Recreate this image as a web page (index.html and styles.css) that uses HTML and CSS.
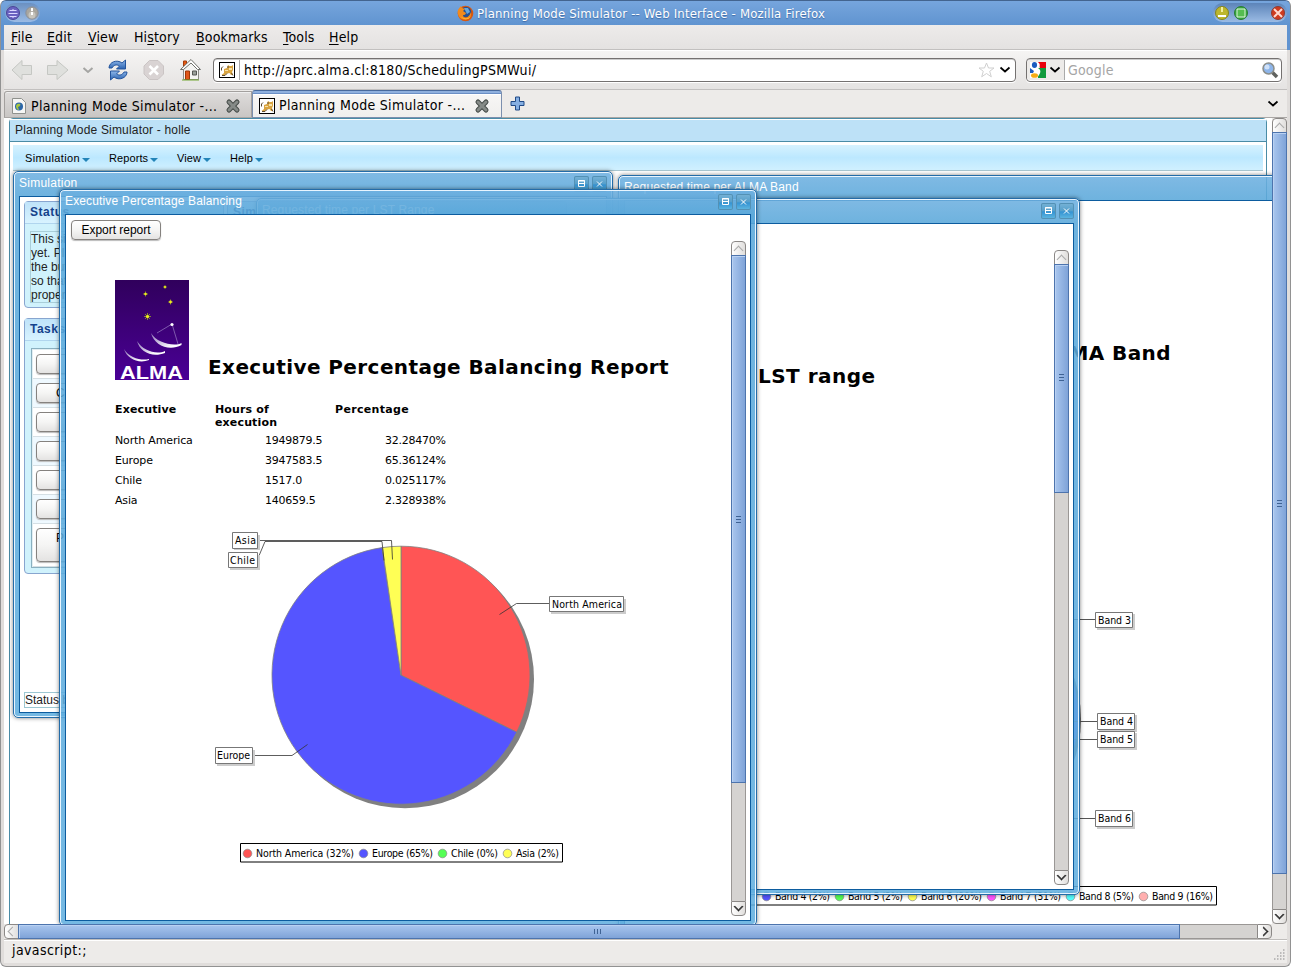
FILE: index.html
```html
<!DOCTYPE html>
<html lang="en">
<head>
<meta charset="utf-8">
<title>Planning Mode Simulator</title>
<link rel="stylesheet" href="styles.css">
</head>
<body>
<svg width="0" height="0" class="defs">
  <defs>
    <linearGradient id="gBlue" x1="0" y1="0" x2="0" y2="1"><stop offset="0" stop-color="#8fb8ea"/><stop offset="1" stop-color="#2a62b0"/></linearGradient>
    <linearGradient id="gAlma" x1="0" y1="0" x2="0" y2="1"><stop offset="0" stop-color="#30005c"/><stop offset="1" stop-color="#4a0096"/></linearGradient>
    <linearGradient id="gDish" x1="0" y1="0" x2="1" y2="1"><stop offset="0" stop-color="#8d74b8"/><stop offset="0.8" stop-color="#fff"/></linearGradient>
    <symbol id="cat" viewBox="0 0 16 16"><rect x=".5" y=".5" width="15" height="15" fill="#fff" stroke="#000"/><path d="M5 7l3-1 1-3 1.500 1h2L14 3v5l-1 2 1 3h-2l-1.500-2L8 11.500 6 13H2.500L5 11z" fill="#d9a441"/><path d="M2.500 8.500V6L4 4.500M3 13.500h3l2-2M9 4v2M12.500 11l1.500 2.500" stroke="#5c4a30" fill="none"/><path d="M10 6h3v2h-3zM6 8h3v1H6z" fill="#f7e2a8"/></symbol>
    <symbol id="closeTab" viewBox="0 0 16 16"><path d="M4 4l8 8M12 4l-8 8" stroke="#454b48" stroke-width="5" stroke-linecap="round"/><path d="M4 4l8 8M12 4l-8 8" stroke="#858a87" stroke-width="3" stroke-linecap="round"/></symbol>
    <symbol id="chev" viewBox="0 0 12 8"><path d="M1.500 1.500L6 5.500l4.500-4" fill="none" stroke="currentColor" stroke-width="1.700"/></symbol>
    <symbol id="max" viewBox="0 0 15 16"><path d="M4.500 4.500h6v6h-6zM4 5h7M4 7.500h7" fill="none" stroke="#fff"/></symbol>
    <symbol id="cls" viewBox="0 0 15 16"><path d="M5 5.500l5 5M10 5.500l-5 5" fill="none" stroke="#fff" stroke-width="1"/></symbol>
  </defs>
</svg>
<div class="browser">
  <header class="titlebar">
    <div class="pill pill-left">
      <svg width="14" height="14" viewBox="0 0 14 14"><circle cx="7" cy="7" r="6.500" fill="#6a62c0" stroke="#4b4799"/><path d="M3.500 4.500h7M2.500 7.500h9M3.500 10.500h7M7 3v2M7 10v2" stroke="#dcd9ff"/></svg>
      <svg width="14" height="14" viewBox="0 0 14 14"><circle cx="7" cy="7" r="6.200" fill="#a9a69f" stroke="#8b9099"/><circle cx="7" cy="9" r="3.500" fill="#c8c5bd"/><path d="M7 2v3M7 6v3" stroke="#fff" stroke-width="2"/></svg>
    </div>
    <div class="caption">
      <svg width="17" height="17" viewBox="0 0 17 17"><circle cx="8.500" cy="8.500" r="7.800" fill="#d9580f"/><circle cx="9" cy="7" r="5.300" fill="#28508f"/><path d="M7 3l4 0 2 4-3 2z" fill="#65a7dd"/><path d="M1 5c1-2 2-3 3-4 0 2 2 2 4 3L6 6l3 2c-1 3-3 1-3 3 2 3 6 2 8-4 1 7-5 9-9 7C2 13 0 9 1 5z" fill="#f28a1c"/><path d="M3 10c2 4 7 5 11 1-2 4-8 5-11-1z" fill="#ffc83a"/></svg>
      <span class="t-caption">Planning Mode Simulator -- Web Interface - Mozilla Firefox</span>
    </div>
    <div class="pill pill-right">
      <svg width="14" height="14" viewBox="0 0 14 14"><circle cx="7" cy="7" r="6.500" fill="#bdb72d" stroke="#85851f"/><path d="M3 9h8v2H3z" fill="#fff"/><path d="M7 1v5" stroke="#f2eda0" stroke-width="2"/></svg>
      <svg width="14" height="14" viewBox="0 0 14 14"><circle cx="7" cy="7" r="6.500" fill="#35a83c" stroke="#2a7b35"/><path d="M3 3h8v8H3z" fill="#55bd50" stroke="#e2f7df"/></svg>
      <svg class="red" width="14" height="14" viewBox="0 0 14 14"><circle cx="7" cy="7" r="6.500" fill="#cf3b1f" stroke="#8f3b33"/><path d="M3 3l8 8M11 3l-8 8" stroke="#ffd9cf" stroke-width="2"/></svg>
    </div>
  </header>
  <div class="inner">
    <nav class="menubar">
      <span class="m1"><u>F</u>ile</span><span class="m2"><u>E</u>dit</span><span class="m3"><u>V</u>iew</span><span class="m4">Hi<u>s</u>tory</span><span class="m5"><u>B</u>ookmarks</span><span class="m6"><u>T</u>ools</span><span class="m7"><u>H</u>elp</span>
    </nav>
    <div class="toolbar">
      <svg class="nav" width="190" height="24" viewBox="0 0 190 24">
        <path d="M1 12L11 2.500v5h9.500v9H11v5z" fill="#dfe0dd" stroke="#c5c7c3"/>
        <path d="M57 12L46 2.500v5h-9.500v9H46v5z" fill="#dfe0dd" stroke="#c5c7c3"/>
        <path d="M72.500 10l4.500 4 4.500-4" fill="none" stroke="#a5a5a3" stroke-width="2"/>
        <path d="M98 10c0-6 8-9 13-5l3.500-3v9h-9l3-3c-3-2-6-1-7.500 2z" fill="url(#gBlue)" stroke="#24549c"/>
        <path d="M116 14c0 6-8 9-13 5l-3.500 3v-9h9l-3 3c3 2 6 1 7.500-2z" fill="url(#gBlue)" stroke="#24549c"/>
        <path d="M138.500 2.500h8.500l5.500 5.500v8l-5.500 5.500h-8.500L133 16V8z" fill="#d9d3d3" stroke="#cac4c4"/><path d="M138.500 8l8.500 8.500M147 8l-8.500 8.500" stroke="#fff" stroke-width="2.600"/>
        <path d="M172.500 3h3v6h-3z" fill="#e25a17" stroke="#a53c0a"/><path d="M172.500 11v10.500h15V11l-7.500-8z" fill="#f4f4f2" stroke="#8b8b86"/><path d="M169.500 11.500L180 1.500l9.500 10h-3L180 5l-7.500 6.500z" fill="#fff" stroke="#6f716c"/><path d="M174.500 13h4v8.500h-4z" fill="#e0561a" stroke="#9e3707"/><path d="M181.500 13h4v4h-4z" fill="#9aa09a" stroke="#555753"/><path d="M171 22h17" stroke="#73a832"/>
      </svg>
      <div class="urlbox">
        <svg width="16" height="16"><use href="#cat"/></svg><i class="sep"></i><span class="t-url">http://aprc.alma.cl:8180/SchedulingPSMWui/</span>
        <svg class="star" width="17" height="16" viewBox="0 0 17 16"><path d="M8.500 1l2 5h5.500l-4.300 3.300 1.600 5.500-4.800-3.300-4.800 3.300 1.600-5.500L1 6h5.500z" fill="#fff" stroke="#cfcfcf"/></svg>
        <svg width="12" height="8"><use href="#chev"/></svg>
      </div>
      <div class="searchbox">
        <div class="engine"><svg width="16" height="16" viewBox="0 0 16 16"><path d="M0 0h8L6 8H0z" fill="#fff"/><path d="M8 0h8v6H10z" fill="#e8000b"/><path d="M8 6h8v10H8z" fill="#119a3c"/><path d="M7 0c4 1 3 5 1 6 3 2 3 4 1 7l-2 3H0V0z" fill="#fff"/><ellipse cx="4.500" cy="3" rx="2.600" ry="3" fill="#1b5bbf"/><path d="M0 6l4 3-1 2H0z" fill="#1b5bbf"/><ellipse cx="4.500" cy="13.500" rx="3.500" ry="2.300" fill="#f6ac14"/></svg><svg width="12" height="8"><use href="#chev"/></svg></div>
        <span class="t-search">Google</span>
        <svg class="mag" width="18" height="18" viewBox="0 0 18 18"><path d="M11 11l5 5" stroke="#60625f" stroke-width="3.500"/><circle cx="7.500" cy="7.500" r="5.500" fill="#8db5ea" stroke="#8b8e8b" stroke-width="1.500"/><circle cx="6" cy="6" r="2.500" fill="#cfe1f8"/></svg>
      </div>
    </div>
    <div class="tabs">
      <div class="tab tab-a"><svg width="14" height="16" viewBox="0 0 14 16"><path d="M.5.5h9l4 4v11H.5z" fill="#f6f6f4" stroke="#8f918d"/><circle cx="7" cy="8.500" r="4" fill="#2c66a8"/><path d="M4 8c1-3 3-2 4-2s0 3-2 3l1 3c-2 0-3-2-3-4z" fill="#a9c740"/></svg><span class="t-tab">Planning Mode Simulator -...</span><svg width="16" height="16"><use href="#closeTab"/></svg></div>
      <div class="tab tab-b"><svg width="16" height="16"><use href="#cat"/></svg><span class="t-tab">Planning Mode Simulator -...</span><svg width="16" height="16"><use href="#closeTab"/></svg></div>
      <svg class="plus" width="15" height="15" viewBox="0 0 15 15"><path d="M5.500 1h4v4.500h4.500v4H9.500V14h-4V9.500H1v-4h4.500z" fill="#86afe2" stroke="#204a87"/></svg>
      <svg class="tabmenu" width="12" height="8"><use href="#chev"/></svg>
    </div>
    <div class="middle">
      <main class="viewport">
        <section class="app">
          <h1>Planning Mode Simulator - holle</h1>
          <div class="appmenu"><span class="a1">Simulation</span><span class="a2">Reports</span><span class="a3">View</span><span class="a4">Help</span></div>
        </section>

        <section class="win w-sim">
          <div class="bar"><span class="wt s-sim">Simulation</span><svg class="wb" width="15" height="16"><use href="#max"/></svg><svg class="wb" width="15" height="16"><use href="#cls"/></svg></div>
          <div class="content simc">
            <div class="simcols">
              <div class="col">
                <div class="panel p-status"><h2>Status</h2><p>This si<br>yet. Pl<br>the but<br>so that<br>proper</p></div>
                <div class="panel p-tasks"><h2>Tasks</h2>
                  <ul><li><button></button></li><li><button>C</button></li><li><button></button></li><li><button></button></li><li><button></button></li><li><button></button></li><li><button class="tall">P</button></li></ul>
                </div>
              </div>
              <div class="panel p-side"><h2>Sim</h2></div>
            </div>
            <div class="statusline">Status b</div>
          </div>
        </section>

        <section class="win w-band">
          <div class="bar"><span class="wt s-band">Requested time per ALMA Band</span></div>
          <div class="content">
            <svg width="647" height="730" viewBox="625 201 647 730">
              <circle cx="952" cy="719" r="129" fill="#606060"/><circle cx="949" cy="716" r="129" fill="#5555ff"/>
              <text class="rt" x="1171" y="360" text-anchor="end">MA Band</text>
              <g stroke="#555"><path d="M1074 619.500h21M1074 721.500h23M1074 739.500h23M1074 818.500h21"/></g>
              <g fill="#ccc"><path d="M1097 614h38v16h-38zM1099 715h38v17h-38zM1099 733h38v17h-38zM1097 812h38v17h-38z"/></g>
              <g fill="#fff" stroke="#777"><path d="M1095.500 612.500h37v15h-37zM1097.500 713.500h37v16h-37zM1097.500 731.500h37v16h-37zM1095.500 810.500h37v16h-37z"/></g>
              <g class="lb"><text x="1098" y="624" textLength="33">Band 3</text><text x="1100" y="725" textLength="33">Band 4</text><text x="1100" y="743" textLength="33">Band 5</text><text x="1098" y="822" textLength="33">Band 6</text></g>
              <path d="M640.500 886.500h576v18.500h-576z" fill="#fff" stroke="#000"/>
              <g stroke="#888" stroke-width=".7"><circle cx="766.500" cy="896.500" r="4.300" fill="#5555ff"/><circle cx="839.500" cy="896.500" r="4.300" fill="#55ff55"/><circle cx="912.500" cy="896.500" r="4.300" fill="#ffff55"/><circle cx="991.500" cy="896.500" r="4.300" fill="#ff55ff"/><circle cx="1070.500" cy="896.500" r="4.300" fill="#55ffff"/><circle cx="1143.500" cy="896.500" r="4.300" fill="#ffafaf"/></g>
              <g class="lb"><text x="775" y="900" textLength="55">Band 4 (2%)</text><text x="848" y="900" textLength="55">Band 5 (2%)</text><text x="921" y="900" textLength="61">Band 6 (20%)</text><text x="1000" y="900" textLength="61">Band 7 (31%)</text><text x="1079" y="900" textLength="55">Band 8 (5%)</text><text x="1152" y="900" textLength="61">Band 9 (16%)</text></g>
            </svg>
          </div>
        </section>

        <section class="win w-lst">
          <div class="bar"><span class="wt s-lst">Requested time per LST Range</span><svg class="wb" width="15" height="16"><use href="#max"/></svg><svg class="wb" width="15" height="16"><use href="#cls"/></svg></div>
          <div class="content lstc">
            <h3 class="rt">LST range</h3>
            <div class="vs"><i class="btn up off"></i><i class="thumb"></i><i class="track"></i><i class="btn dn"></i></div>
          </div>
        </section>

        <section class="win w-exec">
          <div class="bar"><span class="wt s-exec">Executive Percentage Balancing</span><svg class="wb" width="15" height="16"><use href="#max"/></svg><svg class="wb" width="15" height="16"><use href="#cls"/></svg></div>
          <div class="content execc">
            <button class="export">Export report</button>
            <div class="pane">
              <div class="report">
                <div class="rhead">
                  <svg width="74" height="100" viewBox="0 0 74 100"><path d="M0 0h74v100H0z" fill="url(#gAlma)"/>
                    <g stroke="#9ba81c" stroke-width=".8"><path d="M28 14h5M30.500 11.500v5M48 7h4M50 5v4M53 22h5M55.500 19.500v5M29 36.500h7M32.500 33v7M30 34l5 5M35 34l-5 5"/></g>
                    <g fill="#f0ee20"><circle cx="30.500" cy="14" r="1.300"/><circle cx="50" cy="7" r="1.100"/><circle cx="55.500" cy="22" r="1.400"/><circle cx="32.500" cy="36.500" r="1.600"/></g>
                    <g fill="url(#gDish)"><path d="M36 53c3 12 18 19 30.500 12l0-2c-7 4-25 0-30.500-10z"/><path d="M22 61c3 11 15 17 28 12l0-2c-8 4-22 0-28-10z"/><path d="M9 69c3 10 15 15 25 11l0-1c-7 2-20-1-25-10z"/></g>
                    <path d="M42 53l15-9 6 20" fill="none" stroke="#a893cc" stroke-width=".6"/><circle cx="57" cy="44.500" r="1.600" fill="#fff"/>
                    <text x="5" y="98.500" textLength="63" lengthAdjust="spacingAndGlyphs" class="alma">ALMA</text></svg>
                  <h3 class="rt">Executive Percentage Balancing Report</h3>
                </div>
                <div class="grid th"><b>Executive</b><b>Hours of<br>execution</b><b class="pc">Percentage</b></div>
                <div class="grid"><span>North America</span><span class="n">1949879.5</span><span class="n">32.28470%</span></div>
                <div class="grid"><span>Europe</span><span class="n">3947583.5</span><span class="n">65.36124%</span></div>
                <div class="grid"><span>Chile</span><span class="n">1517.0</span><span class="n">0.025117%</span></div>
                <div class="grid"><span>Asia</span><span class="n">140659.5</span><span class="n">2.328938%</span></div>
                <svg class="pie" width="440" height="350" viewBox="200 520 440 350">
                  <circle cx="405" cy="679.200" r="129" fill="#808080"/>
                  <g stroke="#808080" stroke-width=".8"><path d="M401 675.200V546.200A129 129 0 0 1 516.700 732.200z" fill="#ff5555"/><path d="M401 675.200L516.700 732.200A129 129 0 1 1 382 547.600z" fill="#5555ff"/><path d="M401 675.200L382.300 547.600A129 129 0 0 1 401 546.200z" fill="#ffff55"/></g>
                  <path d="M258 540.500h133.500l1 19M257 560.500l8-19h117l2 19M499.500 614.500l17-11h33M252 755.500h40l15.500-11" fill="none" stroke="#333" stroke-width=".8"/>
                  <g fill="#ccc"><path d="M234 535h26v15h-26zM230 555h30v15h-30zM551 599h75v15h-75zM217 750h38v16h-38z"/></g>
                  <g fill="#fff" stroke="#777"><path d="M232.500 532.500h25v16h-25zM228.500 552.500h29v15h-29zM549.500 596.500h74v15h-74zM215.500 747.500h37v16h-37z"/></g>
                  <g class="lb"><text x="235" y="544" textLength="21">Asia</text><text x="230" y="564" textLength="25">Chile</text><text x="552" y="608" textLength="70">North America</text><text x="217" y="759" textLength="33">Europe</text></g>
                  <path d="M240.500 843.500h322v18.500h-322z" fill="#fff" stroke="#000"/>
                  <g stroke="#888" stroke-width=".7"><circle cx="247.500" cy="853.500" r="4.300" fill="#ff5555"/><circle cx="363.500" cy="853.500" r="4.300" fill="#5555ff"/><circle cx="442.500" cy="853.500" r="4.300" fill="#55ff55"/><circle cx="507.500" cy="853.500" r="4.300" fill="#ffff55"/></g>
                  <g class="lb"><text x="256" y="857" textLength="98">North America (32%)</text><text x="372" y="857" textLength="61">Europe (65%)</text><text x="451" y="857" textLength="47">Chile (0%)</text><text x="516" y="857" textLength="43">Asia (2%)</text></g>
                </svg>
              </div>
              <div class="vs"><i class="btn up off"></i><i class="thumb"></i><i class="track"></i><i class="btn dn"></i></div>
            </div>
          </div>
        </section>
      </main>
      <div class="vs mainvs"><i class="btn up off"></i><i class="thumb"></i><i class="track"></i><i class="btn dn"></i></div>
    </div>
    <div class="hs"><i class="btn lf off"></i><i class="thumb"></i><i class="track"></i><i class="btn rg"></i></div>
    <footer class="status"><span>javascript:;</span><svg width="12" height="12" viewBox="0 0 12 12"><path d="M10 1h1.500M7 4h1.500M10 4h1.500M4 7h1.500M7 7h1.500M10 7h1.500M1 10h1.500M4 10h1.500M7 10h1.500M10 10h1.500" stroke="#aaa" stroke-width="1.500"/></svg></footer>
  </div>
</div>
</body>
</html>
```
FILE: styles.css
```css
*{box-sizing:border-box}
html,body{margin:0;height:100%;overflow:hidden;background:#fff}
body{font-family:"DejaVu Sans Condensed","DejaVu Sans",sans-serif;font-size:14px;color:#000}
svg{display:block;flex:none}
h1,h2,h3,p,ul{margin:0;padding:0;font-weight:normal}
li{list-style:none}
i{display:block}
.defs{position:absolute}
.browser{width:1291px;height:967px;border:1px solid #929292;border-top-color:#43648f;border-radius:6px;overflow:hidden;display:flex;flex-direction:column;background:linear-gradient(#6093d0 49px,#e0dddb 49px)}
.titlebar{height:24px;background:linear-gradient(#76a5dd,#6094d0);display:flex;justify-content:space-between;align-items:flex-start;flex:none}
.pill{margin-top:2px;height:19px;border-radius:10px;display:flex;align-items:center;background:linear-gradient(#5c84b9,#9bbbe4)}
.pill-left{width:35px;gap:5px;padding-left:1px;margin-left:4px;background:linear-gradient(#6b90c1,#9bbbe4)}
.pill-right{width:74px;margin-right:3px;padding-left:2px;gap:5px}
.pill-right .red{margin-left:18px}
.caption{display:flex;align-items:center;height:24px;gap:3px;width:370px;margin-left:31px}
.t-caption{color:#fff;font-size:13px;white-space:nowrap;text-shadow:0 1px 1px #3f6ba5;letter-spacing:.18px}
.inner{flex:1;margin:0 3px 3px;display:flex;flex-direction:column;background:#edebe9;min-height:0}
.menubar{height:25px;display:flex;align-items:center;background:linear-gradient(#edebea,#e4e2e1);border-bottom:1px solid #c2c0bf;padding-left:7px;flex:none;letter-spacing:.15px}
.menubar span{white-space:nowrap;line-height:24px}
.menubar u{text-underline-offset:2px}
.m1{width:36px}.m2{width:41px}.m3{width:46px}.m4{width:62px}.m5{width:87px}.m6{width:46px}
.toolbar{height:40px;border-top:1px solid #fff;border-bottom:1px solid #c2c0bf;background:linear-gradient(#f5f4f3,#e5e3e2);display:flex;align-items:center;flex:none}
.nav{margin-left:7px}
.urlbox,.searchbox{height:24px;background:#fff;border:1px solid #747170;border-radius:4px;display:flex;align-items:center;box-shadow:inset 0 1px #ccc,0 1px #fff}
.urlbox{width:803px;margin-left:12px;padding:0 4px 0 5px}
.sep{width:1px;height:20px;background:#aaa;margin:0 4px}
.t-url{flex:1;font-size:14px;letter-spacing:.29px}
.star{margin-right:4px}
.searchbox{width:256px;margin-left:10px;padding-right:2px}
.engine{display:flex;align-items:center;gap:3px;width:38px;height:20px;border-right:1px solid #aaa;background:#edebe9;padding-left:3px;border-radius:3px 0 0 3px}
.t-search{color:#a5a5a5;flex:1;padding-left:3px;letter-spacing:.2px}
.tabs{height:28px;border-bottom:1px solid #aaa7a5;display:flex;align-items:flex-end;flex:none}
.tab{display:flex;align-items:center}
.tab-a{width:248px;height:26px;border:1px solid #a3a09e;border-bottom:0;border-radius:3px 0 0 0;background:linear-gradient(#dedcdb,#c9c6c4);padding:2px 0 0 7px;box-shadow:inset 0 1px #efefef}
.tab-a .t-tab{margin:0 7px 0 5px}
.tab-b{width:250px;height:28px;margin-bottom:-1px;border:1px solid #7b8fae;border-top:1px solid #486a9d;border-radius:3px 3px 0 0;background:linear-gradient(#8fb0de 0 2px,#6b8fc5 2px 3px,#fff 3px 4px,#f7f6f5 4px,#f0efed);padding:4px 0 1px 6px}
.tab-b .t-tab{margin:0 8px 1px 4px}
.t-tab{width:187px;white-space:nowrap;letter-spacing:.3px}
.plus{margin:0 0 6px 8px}
.tabmenu{margin:0 8px 9px auto}
.middle{flex:1;min-height:0;display:flex}
.viewport{width:1268px;background:#fff;position:relative;overflow:hidden;font-family:"Liberation Sans",Arial,sans-serif}
.app{margin-left:5px;width:1258px;height:820px;border:1px solid #4a8ca6;border-radius:4px 4px 0 0}
.app h1{height:23px;font-size:12px;line-height:20px;padding-left:5px;color:#222;background:#bde1f7;border-bottom:1px solid #4a8ca6;border-top:1px solid #fff;letter-spacing:.18px}
.appmenu{margin:3px 3px 0;height:26px;border-bottom:1px solid #a8c6d1;background:linear-gradient(#d6f2ff,#bce8ff 50%,#d0f0ff);display:flex;font-size:11px;line-height:26px;padding-left:12px;letter-spacing:.1px}
.appmenu span{display:flex;align-items:center;gap:2px}
.appmenu span::after{content:"";border:4px solid transparent;border-top-color:#2384b8;border-bottom:0;margin-top:4px}
.a1{width:84px;letter-spacing:.35px}.a2{width:68px}.a3{width:53px}
.win{position:absolute;border:1px solid #246ca8;border-radius:5px;padding:0 5px 4px;display:flex;flex-direction:column;background:linear-gradient(rgba(110,176,224,.88),rgba(90,168,218,.88) 24px,rgba(98,175,223,.88));box-shadow:inset 0 0 0 1px #e8f5ff,0 0 4px rgba(0,0,0,.5);color:#fff}
.bar{height:24px;flex:none;display:flex;align-items:center;gap:3px;font-size:12px}
.wt{flex:1;white-space:nowrap;line-height:20px;padding-bottom:2px}
.s-sim{letter-spacing:.25px}
.s-exec,.s-band,.s-lst{letter-spacing:.14px}
.wb{border-radius:2px;background:linear-gradient(#78b3d6,#559fcb 50%,#3493d3 55%,#62b9e1);box-shadow:inset 0 0 0 1px #5391b5;margin-bottom:1px}
.content{flex:1;min-height:0;background:#fff;border:1px solid #0c5c9f;color:#000;overflow:hidden}
.w-sim{left:9px;top:53px;width:600px;height:547px}
.w-band{left:614px;top:57px;width:700px;height:760px}
.w-lst{left:252px;top:80px;width:824px;height:697px}
.w-exec{left:55px;top:71px;width:698px;height:737px}
.simc{padding:4px;display:flex;flex-direction:column;justify-content:space-between;font-size:12px}
.simcols{display:flex;gap:3px}
.col{width:200px;display:flex;flex-direction:column;gap:10px}
.panel{border:1px solid #88a5cf;border-radius:4px;background:#d0f2fc}
.panel h2{height:22px;border-bottom:1px solid #b0d5ee;font-weight:bold;font-size:12px;letter-spacing:.5px;line-height:21px;padding-left:5px;color:#15428b;background:linear-gradient(#bfe3f9,#d8f3ff)}
.p-status{height:107px}
.p-side{width:340px;height:300px}
.p-status p{margin:7px 5px;border:1px solid #a9ced9;line-height:14px;height:72px;color:#222}
.p-tasks{height:256px}
.p-tasks ul{margin:7px 6px;border:1px solid #8ab0c0;box-shadow:inset 0 0 0 1px #e2eef2;background:#fff;height:220px;padding:1px 1px 0}
.p-tasks li{height:29px;padding:4px 3px;border-bottom:1px solid #d5dfe4}
.p-tasks li:nth-child(even){background:#eff9ff}
.p-tasks li:last-child{height:43px}
button{display:block;font:12px "Liberation Sans",Arial,sans-serif;border:1px solid #85827f;border-radius:4px;background:linear-gradient(#fff,#f5f5f4 50%,#e4e3e2);box-shadow:0 1px 1px #bbb;padding:0;color:#000}
.p-tasks button{width:150px;height:20px;text-align:left;padding-left:19px}
.p-tasks button.tall{height:34px;padding-bottom:15px}
.statusline{border:1px solid #9cc7d2;height:16px;line-height:14px;color:#222;margin-bottom:0}
.lstc{display:flex;justify-content:space-between;padding:26px 4px 4px}
.lstc .rt{margin:113px 0 0 491px;letter-spacing:.48px}
.rt{font:bold 20px/26px "DejaVu Sans",sans-serif;white-space:nowrap;letter-spacing:.41px}
.execc{padding:5px 4px 4px 5px;display:flex;flex-direction:column}
.export{width:90px;height:20px;letter-spacing:-.03px}
.pane{flex:1;min-height:0;display:flex;margin-top:1px;justify-content:space-between}
.report{padding:39px 0 0 44px;font:11px/20px "DejaVu Sans",sans-serif}
.rhead{display:flex;align-items:flex-end;gap:19px}
.alma{font:bold 19px "Liberation Sans",sans-serif;fill:#fff}
.grid{display:grid;grid-template-columns:100px 120px 120px;height:20px;letter-spacing:-.15px}
.th{margin-top:23px;height:28px;line-height:13px;letter-spacing:.15px}
.pc{letter-spacing:.32px}
.n{padding-left:50px;letter-spacing:-.25px}
.pie{margin:9px 0 0 85px}
.lb{font:10.500px "DejaVu Sans Condensed","DejaVu Sans",sans-serif}
.vs{width:15px;display:flex;flex-direction:column;flex:none}
.hs{height:15px;width:1268px;display:flex;flex:none}
.btn{background:linear-gradient(90deg,#fff,#e0dedc);border:1px solid #8b8886;flex:none;display:flex;align-items:center;justify-content:center}
.vs .btn{height:15px}
.hs .btn{width:15px}
.up{border-radius:4px 4px 0 0}.dn{border-radius:0 0 4px 4px}.lf{border-radius:4px 0 0 4px}.rg{border-radius:0 4px 4px 0}
.btn::after{content:"";width:6px;height:6px;border:solid #222;border-width:1.500px 1.500px 0 0}
.dn::after,.rg::after{box-shadow:inset -.5px .5px #222}
.off::after{border-color:#aaa;border-width:1px 1px 0 0}
.up::after{transform:translateY(2px) rotate(-45deg)}
.dn::after{transform:translateY(-2px) rotate(135deg)}
.lf::after{transform:translateX(1px) rotate(-135deg)}
.rg::after{transform:translateX(-1px) rotate(45deg)}
.thumb{background:linear-gradient(90deg,#a9c6ee,#7fa3d8);border:1px solid #4d74ad;box-shadow:inset 1px 1px #b9d1f2;display:flex;align-items:center;justify-content:center;flex:none;margin-top:-1px}
.thumb::after{content:"";width:5px;height:7px;background:repeating-linear-gradient(#3f6394 0 1px,transparent 1px 3px)}
.hs .thumb{margin:0 0 0 -1px;width:1162px;background:linear-gradient(#a9c6ee,#7fa3d8)}
.hs .thumb::after{width:7px;height:5px;margin-right:3px;background:repeating-linear-gradient(90deg,#3f6394 0 1px,transparent 1px 3px)}
.track{flex:1;background:#d5d3d1;border:solid #9a9795;border-width:0 1px}
.hs .track{border-width:1px 0}
.w-exec .thumb{height:528px}
.w-lst .thumb{height:229px}
.w-lst .thumb::after{margin-bottom:3px}
.mainvs .thumb{height:742px}
.status{height:24px;border-top:1px solid #c0bebc;box-shadow:inset 0 1px #fff;display:flex;justify-content:space-between;padding:0 2px 2px 8px;flex:none;line-height:21px;letter-spacing:.4px}
.status svg{align-self:flex-end}
```
